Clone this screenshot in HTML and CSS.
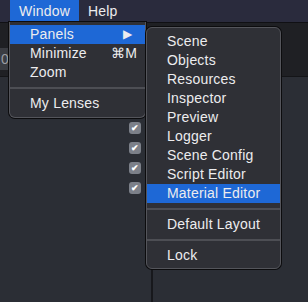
FILE: index.html
```
<!DOCTYPE html>
<html>
  <head>
    <meta charset="utf-8">
    <title>Window menu</title>
    <link rel="stylesheet" href="styles.css">
  </head>
  <body>
    <div class="menubar">
      <span class="menubar-item active">Window</span>
      <span class="menubar-item">Help</span>
    </div>
    <div class="toolbar">
      <div class="field">1.0</div>
    </div>
    <div class="workspace">
      <div class="panel">
        <div class="checks">
          <span class="check">&#10004;</span>
          <span class="check">&#10004;</span>
          <span class="check">&#10004;</span>
          <span class="check">&#10004;</span>
        </div>
      </div>
      <div class="panel-right"></div>
    </div>

    <div class="menu window-menu">
      <div class="item selected"><span>Panels</span><span class="arrow">&#9654;</span></div>
      <div class="item"><span>Minimize</span><span class="key">&#8984;M</span></div>
      <div class="item"><span>Zoom</span></div>
      <div class="sep"></div>
      <div class="item"><span>My Lenses</span></div>
    </div>

    <div class="menu sub-menu">
      <div class="item">Scene</div>
      <div class="item">Objects</div>
      <div class="item">Resources</div>
      <div class="item">Inspector</div>
      <div class="item">Preview</div>
      <div class="item">Logger</div>
      <div class="item">Scene Config</div>
      <div class="item">Script Editor</div>
      <div class="item selected">Material Editor</div>
      <div class="sep"></div>
      <div class="item">Default Layout</div>
      <div class="sep"></div>
      <div class="item">Lock</div>
    </div>
  </body>
</html>
```

FILE: styles.css
```
body {
  margin: 0;
  width: 308px;
  height: 302px;
  overflow: hidden;
  background-color: #2b2e35;
  font-family: "Liberation Sans", Arial, sans-serif;
  font-size: 14px;
  letter-spacing: 0.2px;
  color: #ececee;
  position: relative;
}

.menubar {
  height: 22px;
  background-color: #2a2b3d;
  display: flex;
  padding-left: 10px;
  border-bottom: 1px solid #101014;
}
.menubar-item { padding: 0 9px; line-height: 22px; }
.menubar-item.active { background-color: #1e68d6; }

.toolbar {
  height: 22px;
  padding: 25px 0 6px;
  background-color: #1f2024;
  border-bottom: 1px solid #141518;
}
.toolbar .field {
  margin-left: -30px;
  width: 39px;
  height: 22px;
  line-height: 22px;
  background-color: #3a3c42;
  color: #9a9ca2;
  text-align: right;
}

.workspace { display: flex; height: 230px; }
.panel {
  width: 151px;
  border-right: 2px solid #17181c;
}
.checks {
  display: flex;
  flex-direction: column;
  gap: 8px;
  padding: 45px 0 0 129px;
}
.check {
  width: 12px;
  height: 12px;
  border-radius: 3px;
  background-color: #7c8089;
  color: #fff;
  font-size: 9px;
  font-weight: bold;
  line-height: 12px;
  text-align: center;
}
.panel-right { flex: 1; }

.menu {
  position: absolute;
  background-color: #2f3036;
  border: 1px solid #54555b;
  box-shadow: 0 0 0 1px #0c0c0e;
}
.menu .item {
  height: 19px;
  line-height: 19px;
  padding: 0 8px 0 20px;
  display: flex;
  justify-content: space-between;
}
.menu .item.selected { background-color: #1e68d6; }
.menu .sep {
  height: 2px;
  margin: 5px 0;
  background-color: #4d4e54;
}

.window-menu {
  left: 9px;
  top: 22px;
  width: 135px;
  padding: 3px 0 4px;
  border-top: none;
  border-radius: 0 0 6px 6px;
}
.window-menu .arrow { font-size: 12px; padding-right: 5px; }

.sub-menu {
  left: 146px;
  top: 27px;
  width: 133px;
  padding: 4px 0 3px;
  border-radius: 6px;
}
```
